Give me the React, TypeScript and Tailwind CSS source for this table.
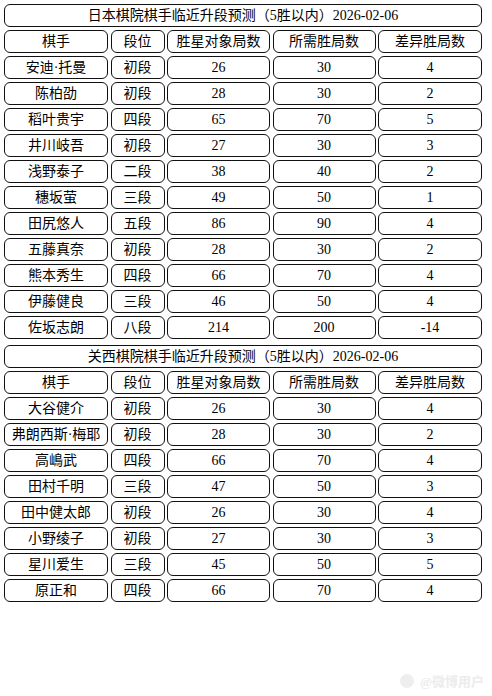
import React from 'react';

type Row = [string, string, string, string, string];

const headers: Row = ['棋手', '段位', '胜星对象局数', '所需胜局数', '差异胜局数'];

const nihonRows: Row[] = [
  ['安迪·托曼', '初段', '26', '30', '4'],
  ['陈柏劭', '初段', '28', '30', '2'],
  ['稻叶贵宇', '四段', '65', '70', '5'],
  ['井川岐吾', '初段', '27', '30', '3'],
  ['浅野泰子', '二段', '38', '40', '2'],
  ['穗坂萤', '三段', '49', '50', '1'],
  ['田尻悠人', '五段', '86', '90', '4'],
  ['五藤真奈', '初段', '28', '30', '2'],
  ['熊本秀生', '四段', '66', '70', '4'],
  ['伊藤健良', '三段', '46', '50', '4'],
  ['佐坂志朗', '八段', '214', '200', '-14'],
];

const kansaiRows: Row[] = [
  ['大谷健介', '初段', '26', '30', '4'],
  ['弗朗西斯·梅耶', '初段', '28', '30', '2'],
  ['高嶋武', '四段', '66', '70', '4'],
  ['田村千明', '三段', '47', '50', '3'],
  ['田中健太郎', '初段', '26', '30', '4'],
  ['小野绫子', '初段', '27', '30', '3'],
  ['星川爱生', '三段', '45', '50', '5'],
  ['原正和', '四段', '66', '70', '4'],
];

const cell = 'h-[23px] flex items-center justify-center border border-[#111] rounded-[6px] whitespace-nowrap';

const RankTable: React.FC<{ title: string; rows: Row[] }> = ({ title, rows }) => (
  <div className="grid grid-cols-[104px_54px_103px_103px_104px] gap-x-[2.5px] gap-y-[3px]">
    <div className={`${cell} col-span-5`}>{title}</div>
    {headers.map((h) => (
      <div key={h} className={cell}>{h}</div>
    ))}
    {rows.map((r) =>
      r.map((v, i) => (
        <div key={r[0] + i} className={cell}>{v}</div>
      ))
    )}
  </div>
);

export default function App() {
  return (
    <div
      className="relative w-[492px] h-[696px] bg-white text-black text-[14px] leading-none px-[4px] pt-[4px]"
      style={{ fontFamily: '"Liberation Serif", "Noto Sans CJK SC", serif' }}
    >
      <div className="flex flex-col gap-[6px]">
        <RankTable title="日本棋院棋手临近升段预测（5胜以内）2026-02-06" rows={nihonRows} />
        <RankTable title="关西棋院棋手临近升段预测（5胜以内）2026-02-06" rows={kansaiRows} />
      </div>
      <div className="absolute right-[8px] bottom-[8px] flex items-center gap-[6px] text-[#ececec] text-[13px] font-bold">
        <span className="w-[14px] h-[14px] rounded-full bg-[#eeeeee]" />
        <span>@微博用户</span>
      </div>
    </div>
  );
}
